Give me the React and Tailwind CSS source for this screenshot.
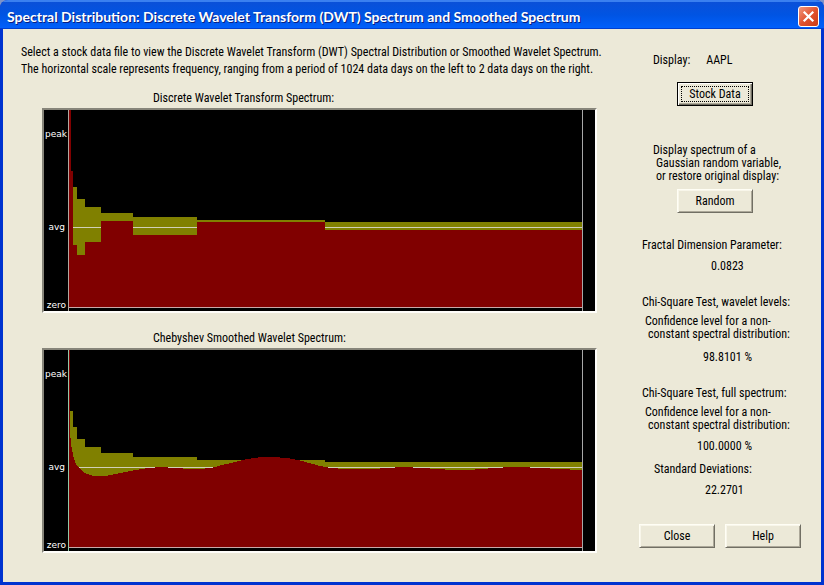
import React from 'react';

const OLIVE = '#808000';
const RED = '#800000';

// [x start, x end, top] of each wavelet level
const levels = [
  [26, 29, 61],
  [29, 33, 77],
  [33, 41, 89],
  [41, 57, 97],
  [57, 89, 103],
  [89, 153, 107],
  [153, 281, 110],
  [281, 538, 112],
];

// where the spectrum starts in each level
const spectrum = [61, 135, 145, 132, 111, 125, 112, 120];

const curve = [
  [25, 0], [26, 83], [27, 93], [28, 100], [30, 109], [33, 116], [36, 119], [41, 123], [46, 125],
  [53, 126.5], [61, 126], [71, 124], [86, 121], [101, 118.5], [116, 117], [131, 118], [146, 119],
  [161, 118.5], [169, 117.5], [176, 115.5], [191, 112], [203, 109], [214, 107.5], [231, 107],
  [246, 108.5], [256, 110.5], [276, 116], [287, 118], [301, 119], [331, 119], [341, 118], [361, 117],
  [386, 118.5], [401, 119.5], [431, 119.5], [451, 118], [476, 116.5], [486, 117.5], [506, 118.5],
  [526, 119.5], [538, 120],
];

function Plot({ label, axisColor, children }) {
  return (
    <div className="border-2 border-t-[#87857a] border-l-[#87857a] border-r-[#fffefa] border-b-[#fffefa] bg-black">
      <svg viewBox="0 0 551 201" className="block w-full h-auto" role="img" aria-label={label} shapeRendering="crispEdges">
        {levels.map(([x1, x2, top]) => (
          <rect key={x1} x={x1} y={top} width={x2 - x1} height={197 - top} fill={OLIVE} />
        ))}
        <rect x="29" y="117" width="509" height="1" fill="#d0d0b8" />
        {children}
        <rect x="24" y="197" width="515" height="1" fill="#c8a8a8" />
        <rect x="24" y="0" width="1" height="201" fill={axisColor} />
        <rect x="538" y="0" width="1" height="201" fill="#a8a8a8" />
        <g fill="#fff" fontSize="9" fontFamily="'DejaVu Sans', sans-serif" textAnchor="end">
          <text x="23" y="27">peak</text>
          <text x="21" y="120">avg</text>
          <text x="22" y="198">zero</text>
        </g>
      </svg>
    </div>
  );
}

function Button({ children, isDefault }) {
  const edge = isDefault
    ? 'border border-black shadow-[inset_1px_1px_0_#fff,inset_-1px_-1px_0_#716f64,inset_-2px_-2px_0_#aca899] p-[3px]'
    : 'border border-t-[#fffef5] border-l-[#fffef5] border-r-[#716f64] border-b-[#716f64] shadow-[inset_1px_1px_0_#f8f6ea,inset_-1px_-1px_0_#aca899] p-[3px]';
  return (
    <button type="button" className={`w-[76px] h-6 bg-[#ece9d8] leading-[14px] ${edge}`}>
      <span className={`block border border-dotted ${isDefault ? 'border-black' : 'border-transparent'}`}>{children}</span>
    </button>
  );
}

export default function App() {
  return (
    <div className="min-h-screen flex flex-col bg-[#7d93c8]">
      <div className="grow flex flex-col rounded-t-lg overflow-hidden bg-[#0033d0] font-['Roboto_Condensed','Liberation_Sans',sans-serif] text-[12px] text-black">
        {/* Title bar */}
        <header className="h-[29px] flex items-center justify-between pl-[7px] pr-[5px] pt-0.5 bg-linear-to-b from-[#0a50d8] via-[#0054e3] to-[#0060fc] border-t-2 border-t-[#3a80f0] border-b border-b-[#0040d0]">
          <h1 className="font-['Lato',sans-serif] text-[14px] font-bold text-white [text-shadow:1px_1px_0_#0a1f80]">
            Spectral Distribution: Discrete Wavelet Transform (DWT) Spectrum and Smoothed Spectrum
          </h1>
          <button type="button" aria-label="Close window" className="size-[21px] shrink-0 rounded-[3px] border border-white bg-linear-to-br from-[#f0967c] via-[#e1532f] to-[#cc3a12] flex items-center justify-center">
            <svg viewBox="0 0 13 13" className="size-[13px]" stroke="#fff" strokeWidth="2.2" strokeLinecap="square">
              <path d="M2.5 2.5l8 8M10.5 2.5l-8 8" />
            </svg>
          </button>
        </header>

        <main className="grow flex mx-[3px] mb-[3px] pl-[18px] pr-5 bg-[#ece9d8]">
          <section className="flex-1 min-w-0 pt-[15px]">
            <p className="leading-[17px] whitespace-nowrap">
              Select a stock data file to view the Discrete Wavelet Transform (DWT) Spectral Distribution or Smoothed Wavelet Spectrum.
              <br />
              The horizontal scale represents frequency, ranging from a period of 1024 data days on the left to 2 data days on the right.
            </p>
            <div className="pl-[21px]">
              <h2 className="mt-3 mb-0.5 pl-[111px] leading-4">Discrete Wavelet Transform Spectrum:</h2>
              <Plot label="Discrete Wavelet Transform Spectrum" axisColor="#b0a8a0">
                {levels.map(([x1, x2], i) => (
                  <rect key={x1} x={x1} y={spectrum[i]} width={x2 - x1} height={197 - spectrum[i]} fill={RED} />
                ))}
                <rect x="25" y="0" width="2" height="197" fill={RED} />
              </Plot>
              <h2 className="mt-[17px] mb-0.5 pl-[111px] leading-4">Chebyshev Smoothed Wavelet Spectrum:</h2>
              <Plot label="Chebyshev Smoothed Wavelet Spectrum" axisColor="#90c8a8">
                <path d={`M25 197L${curve.map((p) => p.join(' ')).join('L')}L538 197Z`} fill={RED} />
                <rect x="25" y="0" width="1" height="197" fill={RED} />
              </Plot>
            </div>
          </section>

          <aside className="w-[162px] ml-[42px] pt-[23px] shrink-0 leading-[13px] whitespace-nowrap">
            <div className="flex gap-4 pl-[14px] leading-4">
              <span>Display:</span>
              <output>AAPL</output>
            </div>
            <div className="mt-[14px] pl-[38px]">
              <Button isDefault>Stock Data</Button>
            </div>
            <p className="mt-[38px] pl-[14px]">
              Display spectrum of a
              <span className="block pl-[3px]">Gaussian random variable,</span>
              <span className="block pl-[3px]">or restore original display:</span>
            </p>
            <div className="mt-1.5 pl-[38px]">
              <Button>Random</Button>
            </div>

            <dl>
              <dt className="mt-[26px] pl-[3px]">Fractal Dimension Parameter:</dt>
              <dd className="mt-2 pl-[72px]">0.0823</dd>
              <dt className="mt-[23px] pl-[3px]">
                Chi-Square Test, wavelet levels:
                <span className="block mt-1.5 pl-[3px]">Confidence level for a non-</span>
                <span className="block pl-[6px]">constant spectral distribution:</span>
              </dt>
              <dd className="mt-[10px] pl-[64px]">98.8101 %</dd>
              <dt className="mt-[23px] pl-[3px]">
                Chi-Square Test, full spectrum:
                <span className="block mt-1.5 pl-[3px]">Confidence level for a non-</span>
                <span className="block pl-[6px]">constant spectral distribution:</span>
              </dt>
              <dd className="mt-2 pl-[58px]">100.0000 %</dd>
              <dt className="mt-[10px] pl-[15px]">Standard Deviations:</dt>
              <dd className="mt-2 pl-[66px]">22.2701</dd>
            </dl>

            <div className="mt-[27px] flex justify-between">
              <Button>Close</Button>
              <Button>Help</Button>
            </div>
          </aside>
        </main>
      </div>
    </div>
  );
}
